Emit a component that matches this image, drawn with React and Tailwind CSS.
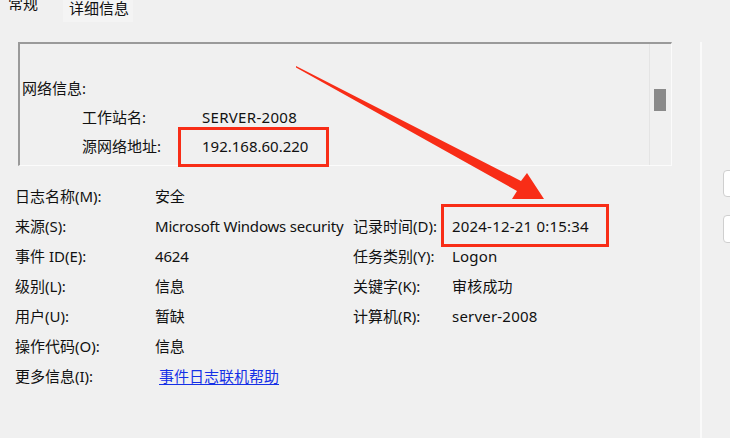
import React from 'react';

const fields = [
    ['日志名称(M):', '安全', null, null],
    ['来源(S):', 'Microsoft Windows security', '记录时间(D):', '2024-12-21 0:15:34'],
    ['事件 ID(E):', '4624', '任务类别(Y):', 'Logon'],
    ['级别(L):', '信息', '关键字(K):', '审核成功'],
    ['用户(U):', '暂缺', '计算机(R):', 'server-2008'],
    ['操作代码(O):', '信息', null, null],
];

function Row({ label, value, label2, value2 }) {
    return (
        <div className="flex h-[30px] items-center">
            <div className="w-[140px] shrink-0">{label}</div>
            <div className="w-[198px] shrink-0 whitespace-nowrap tracking-[-0.2px]">{value}</div>
            {label2 && <div className="w-[99px] shrink-0">{label2}</div>}
            {value2 && <div className="whitespace-nowrap tracking-[0.2px]">{value2}</div>}
        </div>
    );
}

export default function App() {
    return (
        <div className="relative w-[730px] h-[438px] overflow-hidden bg-[#f0f0f0] text-[15px] text-[#111] font-['Noto_Sans','Noto_Sans_CJK_SC',sans-serif]">
            {/* tabs */}
            <div className="flex h-[22px]">
                <div className="w-[63px] pl-[8px] leading-[15px] -mt-[4px]">常规</div>
                <div className="w-[70px] pl-[6px] bg-[#f4f4f4] leading-[15px] pt-[1px]">详细信息</div>
            </div>

            {/* panel */}
            <div className="ml-[4px] w-[698px] h-[400px] border-r-2 border-b-[3px] border-[#fafafa]">
                {/* description box */}
                <div className="flex mt-[20px] ml-[14px] w-[654px] h-[124px] border-t-2 border-l-2 border-t-[#9a9a9a] border-l-[#9a9a9a] border-r border-b border-r-[#fbfbfb] border-b-[#fbfbfb]">
                    <div className="flex-1 pl-[2px] pt-[30px] leading-[29px]">
                        <div>网络信息:</div>
                        <div className="flex pl-[60px]">
                            <div className="w-[120px]">工作站名:</div>
                            <div className="tracking-[0.3px]">SERVER-2008</div>
                        </div>
                        <div className="flex pl-[60px]">
                            <div className="w-[120px]">源网络地址:</div>
                            <div>192.168.60.220</div>
                        </div>
                    </div>
                    <div className="w-[22px] border-l border-[#e4e4e4]">
                        <div className="mt-[45px] ml-[4px] w-[12px] h-[22px] bg-[#8a8a8a]" />
                    </div>
                </div>

                {/* fields */}
                <div className="mt-[15px] pl-[11px]">
                    {fields.map(([a, b, c, d]) => (
                        <Row key={a} label={a} value={b} label2={c} value2={d} />
                    ))}
                    <div className="flex h-[30px] items-center">
                        <div className="w-[144px] shrink-0">更多信息(I):</div>
                        <a className="text-[#1530e6] underline underline-offset-2">事件日志联机帮助</a>
                    </div>
                </div>
            </div>

            {/* right side buttons, partially visible */}
            <div className="absolute left-[723px] top-[170px] w-[20px] h-[27px] rounded-[4px] bg-white border border-[#cfcfcf]" />
            <div className="absolute left-[723px] top-[215px] w-[20px] h-[28px] rounded-[4px] bg-white border border-[#cfcfcf]" />

            {/* annotations */}
            <div className="absolute left-[178px] top-[127px] w-[151px] h-[40px] border-[3px] border-[#f82d17]" />
            <div className="absolute left-[441px] top-[204px] w-[168px] h-[43px] border-[3px] border-[#f82d17]" />
            <svg className="absolute left-0 top-0" width="730" height="438" viewBox="0 0 730 438">
                <polygon
                    points="296,66 521,181 527,173 544,199 512,199 517,191 296,67.5"
                    fill="#f82d17"
                />
            </svg>
        </div>
    );
}
